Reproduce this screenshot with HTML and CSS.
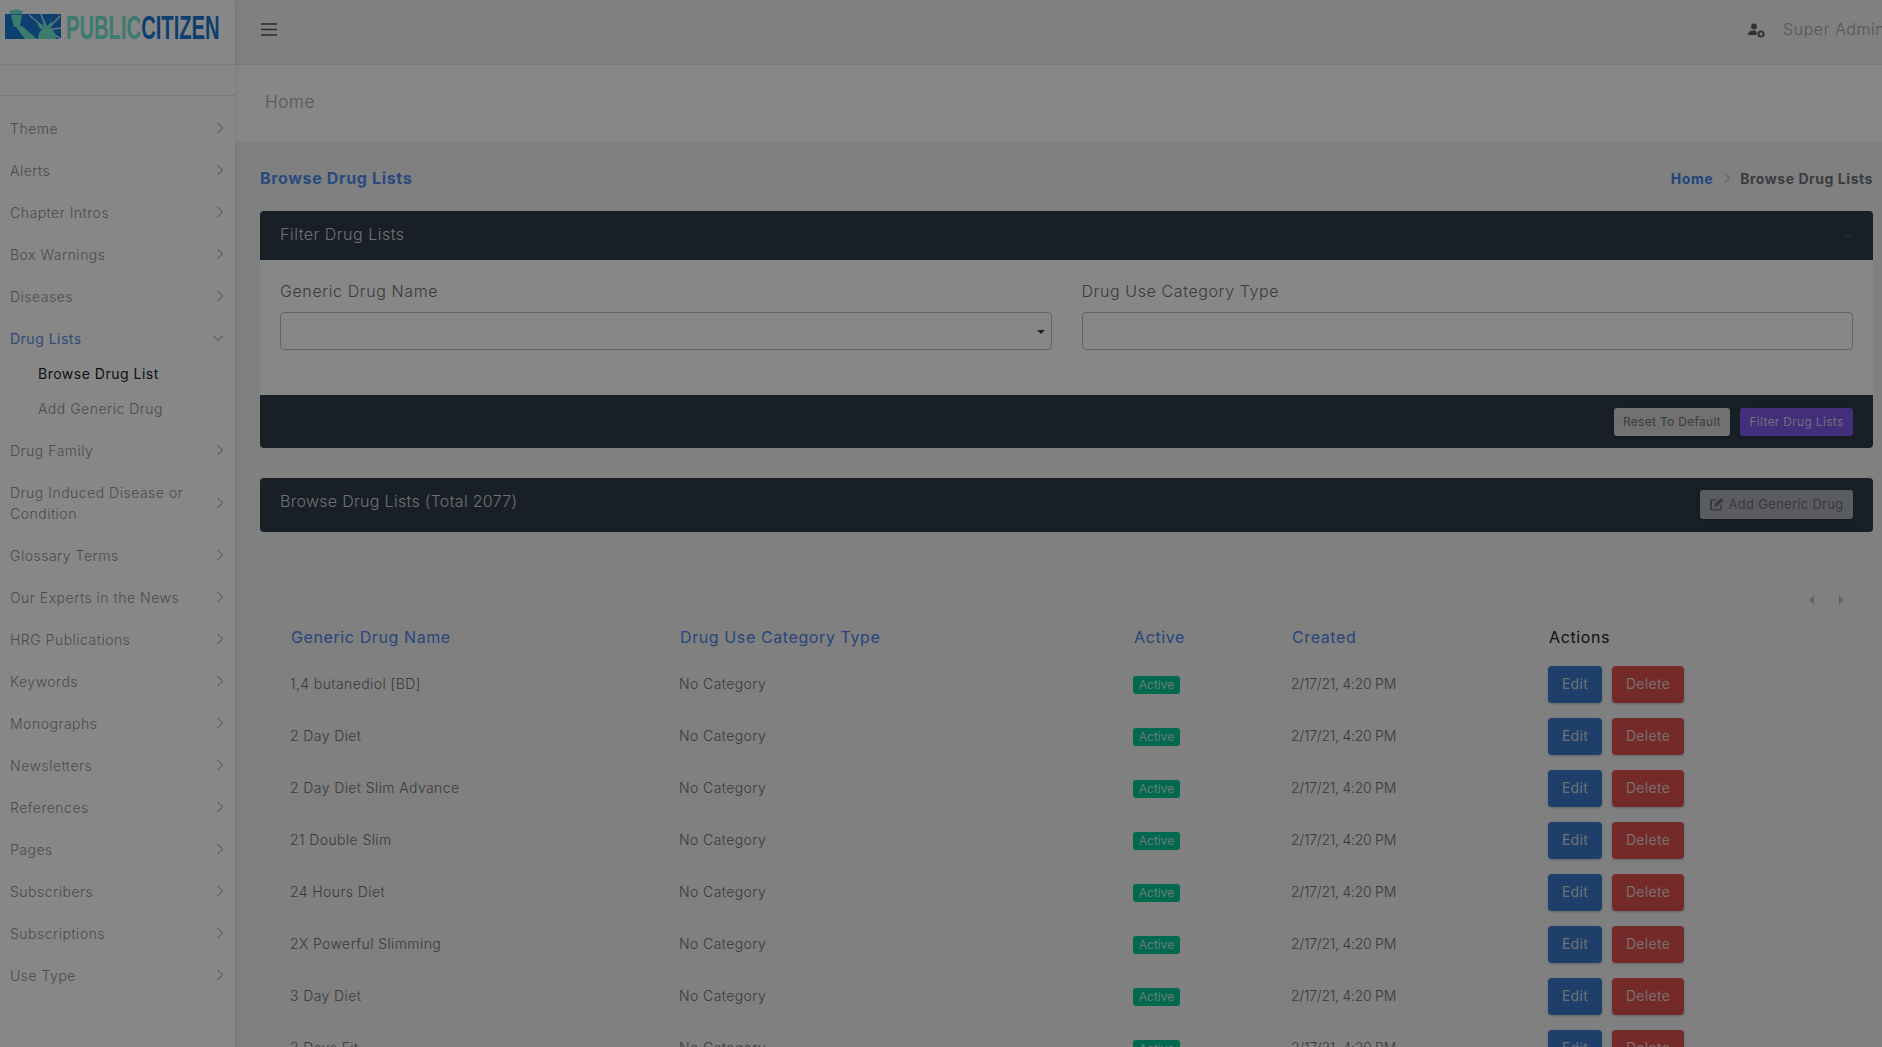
FILE: index.html
```html
<!DOCTYPE html>
<html lang="en">
<head>
<meta charset="utf-8">
<title>Browse Drug Lists</title>
<link rel="stylesheet" href="styles.css">
</head>
<body>
<svg class="sprite" aria-hidden="true">
  <symbol id="right" viewBox="0 0 8 12"><path d="M1.500 1l5 5-5 5" fill="none" stroke="currentColor" stroke-width="1"/></symbol>
  <symbol id="down" viewBox="0 0 12 8"><path d="M1 1.500l5 5 5-5" fill="none" stroke="currentColor" stroke-width="1"/></symbol>
</svg>
<div class="app">
  <aside class="sidebar">
    <div class="brand">
      <svg class="logo" viewBox="0 0 215 32" role="img" aria-label="Public Citizen">
        <rect x="0" y="5" width="56" height="25" fill="#1a78d2"/>
        <path d="M42 21L24 6M42 21L36 5M42 21L55 7M42 21L56 19M42 21L56 30" stroke="#fff" stroke-width="1.500" opacity=".75" fill="none"/>
        <path d="M33 30c0-7 4-11 9-11s9 4 9 11z" fill="#70e8cf"/>
        <path d="M35 20l-3-6 6 3 1-7 3 7 5-5-1 8z" fill="#70e8cf"/>
        <ellipse cx="11" cy="3" rx="7" ry="2.500" fill="#70e8cf"/>
        <path d="M6 6h11l-2 12H9z" fill="#70e8cf"/>
        <path d="M11 18l6-1 15 13H20z" fill="#70e8cf"/>
        <text class="logo-word" transform="translate(61 30) scale(.612 1)"><tspan fill="#70e8cf">PUBLIC</tspan><tspan fill="#1a78d2">CITIZEN</tspan></text>
      </svg>
    </div>
    <div class="side-gap"></div>
    <nav class="menu">
      <a class="item"><span>Theme</span><svg class="chev"><use href="#right"/></svg></a>
      <a class="item"><span>Alerts</span><svg class="chev"><use href="#right"/></svg></a>
      <a class="item"><span>Chapter Intros</span><svg class="chev"><use href="#right"/></svg></a>
      <a class="item"><span>Box Warnings</span><svg class="chev"><use href="#right"/></svg></a>
      <a class="item"><span>Diseases</span><svg class="chev"><use href="#right"/></svg></a>
      <a class="item item-open"><span>Drug Lists</span><svg class="chev-down"><use href="#down"/></svg></a>
      <div class="submenu">
        <a class="subitem subitem-current">Browse Drug List</a>
        <a class="subitem">Add Generic Drug</a>
      </div>
      <a class="item"><span>Drug Family</span><svg class="chev"><use href="#right"/></svg></a>
      <a class="item item-wrap"><span>Drug Induced Disease or Condition</span><svg class="chev"><use href="#right"/></svg></a>
      <a class="item"><span>Glossary Terms</span><svg class="chev"><use href="#right"/></svg></a>
      <a class="item"><span>Our Experts in the News</span><svg class="chev"><use href="#right"/></svg></a>
      <a class="item"><span>HRG Publications</span><svg class="chev"><use href="#right"/></svg></a>
      <a class="item"><span>Keywords</span><svg class="chev"><use href="#right"/></svg></a>
      <a class="item"><span>Monographs</span><svg class="chev"><use href="#right"/></svg></a>
      <a class="item"><span>Newsletters</span><svg class="chev"><use href="#right"/></svg></a>
      <a class="item"><span>References</span><svg class="chev"><use href="#right"/></svg></a>
      <a class="item"><span>Pages</span><svg class="chev"><use href="#right"/></svg></a>
      <a class="item"><span>Subscribers</span><svg class="chev"><use href="#right"/></svg></a>
      <a class="item"><span>Subscriptions</span><svg class="chev"><use href="#right"/></svg></a>
      <a class="item"><span>Use Type</span><svg class="chev"><use href="#right"/></svg></a>
    </nav>
  </aside>
  <div class="main">
    <header class="topbar">
      <svg class="burger" viewBox="0 0 16 13"><path d="M0 1h16M0 6.500h16M0 12h16" fill="none" stroke="currentColor" stroke-width="1.600"/></svg>
      <div class="user">
        <svg class="user-icon" viewBox="0 0 17 15"><circle cx="6" cy="3.500" r="3" fill="currentColor"/><path d="M0 12c0-3 2-4.500 5-4.500 1.500 0 2.500.3 3.500 1V12z" fill="currentColor"/><circle cx="13" cy="11" r="2.600" fill="none" stroke="currentColor" stroke-width="2"/></svg>
        <span class="user-name">Super Admin</span>
      </div>
    </header>
    <div class="crumbstrip">Home</div>
    <div class="content">
      <div class="title-row">
        <h1 class="page-title">Browse Drug Lists</h1>
        <div class="crumbs"><a class="crumb-link">Home</a><svg class="crumb-sep"><use href="#right"/></svg><span>Browse Drug Lists</span></div>
      </div>
      <section class="filter-card">
        <div class="dark-head filter-head"><span class="filter-title">Filter Drug Lists</span><i class="collapse"></i></div>
        <div class="filter-body">
          <label class="field"><span class="field-label">Generic Drug Name</span><div class="input"><i class="caret"></i></div></label>
          <label class="field"><span class="field-label">Drug Use Category Type</span><div class="input"></div></label>
        </div>
        <div class="filter-foot">
          <button class="btn-small btn-reset">Reset To Default</button>
          <button class="btn-small btn-filter">Filter Drug Lists</button>
        </div>
      </section>
      <section class="list-head dark-head">
        <span class="list-title">Browse Drug Lists (Total 2077)</span>
        <button class="btn-small btn-add">
          <svg class="add-icon" viewBox="0 0 14 13"><path d="M1.500 2h6.500l-1.300 1.300H2.300v8h8V7.500L11.600 6.200V11.500a1 1 0 0 1-1 1H1.500a1 1 0 0 1-1-1V3a1 1 0 0 1 1-1z" fill="currentColor"/><path d="M5 6.500L10.800 1 13 3 7.200 8.700l-2.600.4z" fill="currentColor"/></svg>Add Generic Drug</button>
      </section>
      <div class="pager">
        <span class="page-btn"><i class="tri-left"></i></span>
        <span class="page-btn"><i class="tri-right"></i></span>
      </div>
      <table class="grid">
        <colgroup><col class="c1"><col class="c2"><col class="c3"><col class="c4"><col class="c5"></colgroup>
        <thead><tr><th>Generic Drug Name</th><th>Drug Use Category Type</th><th>Active</th><th>Created</th><th class="th-plain">Actions</th></tr></thead>
        <tbody>
          <tr><td class="t">1,4 butanediol [BD]</td><td class="t">No Category</td><td><span class="badge">Active</span></td><td class="t date">2/17/21, 4:20 PM</td><td><button class="btn-edit">Edit</button><button class="btn-del">Delete</button></td></tr>
          <tr><td class="t">2 Day Diet</td><td class="t">No Category</td><td><span class="badge">Active</span></td><td class="t date">2/17/21, 4:20 PM</td><td><button class="btn-edit">Edit</button><button class="btn-del">Delete</button></td></tr>
          <tr><td class="t">2 Day Diet Slim Advance</td><td class="t">No Category</td><td><span class="badge">Active</span></td><td class="t date">2/17/21, 4:20 PM</td><td><button class="btn-edit">Edit</button><button class="btn-del">Delete</button></td></tr>
          <tr><td class="t">21 Double Slim</td><td class="t">No Category</td><td><span class="badge">Active</span></td><td class="t date">2/17/21, 4:20 PM</td><td><button class="btn-edit">Edit</button><button class="btn-del">Delete</button></td></tr>
          <tr><td class="t">24 Hours Diet</td><td class="t">No Category</td><td><span class="badge">Active</span></td><td class="t date">2/17/21, 4:20 PM</td><td><button class="btn-edit">Edit</button><button class="btn-del">Delete</button></td></tr>
          <tr><td class="t">2X Powerful Slimming</td><td class="t">No Category</td><td><span class="badge">Active</span></td><td class="t date">2/17/21, 4:20 PM</td><td><button class="btn-edit">Edit</button><button class="btn-del">Delete</button></td></tr>
          <tr><td class="t">3 Day Diet</td><td class="t">No Category</td><td><span class="badge">Active</span></td><td class="t date">2/17/21, 4:20 PM</td><td><button class="btn-edit">Edit</button><button class="btn-del">Delete</button></td></tr>
          <tr><td class="t">3 Days Fit</td><td class="t">No Category</td><td><span class="badge">Active</span></td><td class="t date">2/17/21, 4:20 PM</td><td><button class="btn-edit">Edit</button><button class="btn-del">Delete</button></td></tr>
        </tbody>
      </table>
    </div>
  </div>
</div>
<div class="backdrop"></div>
</body>
</html>
```
FILE: styles.css
```css
* { box-sizing: border-box; }
html, body { margin: 0; height: 100%; overflow: hidden; }
body {
  font-family: Inter, "Open Sans", "Liberation Sans", sans-serif;
  font-weight: 300;
  background: #f1f2f4;
  color: #6e7074;
}
.sprite { width: 0; height: 0; position: absolute; }
.backdrop { position: fixed; inset: 0; background: rgba(0, 0, 0, .47); }

.app { display: grid; grid-template-columns: 235px 1fr; height: 1047px; }

.sidebar { background: #fff; box-shadow: 0 0 6px rgba(0,0,0,.12); position: relative; }
.brand { height: 65px; padding: 9px 0 0 5px; border-bottom: 1px solid #efefef; }
.logo { display: block; width: 215px; height: 32px; }
.logo-word { font-family: "Liberation Sans", sans-serif; font-weight: 700; font-size: 33px; }
.side-gap { height: 31px; border-bottom: 1px solid #e2e2e2; }
.menu { padding-top: 11px; font-size: 14px; letter-spacing: .5px; color: #8e9095; }
.item { display: flex; align-items: center; justify-content: space-between; height: 42px; padding: 0 11px 0 10px; }
.item-wrap { height: 63px; line-height: 21px; }
.item-wrap span { width: 185px; }
.chev { width: 8px; height: 12px; flex: none; color: #8e9095; }
.chev-down { width: 12px; height: 8px; flex: none; color: #8e9095; margin-right: 0; }
.item-open { color: #5a8ee0; font-weight: 400; letter-spacing: .5px; }
.submenu { margin-top: -3px; padding-bottom: 3px; }
.subitem { display: block; height: 35px; line-height: 35px; padding-left: 38px; }
.subitem-current { color: #20242b; font-weight: 400; letter-spacing: .5px; }

.main { min-width: 0; }
.topbar { height: 65px; display: flex; align-items: center; justify-content: space-between; padding: 0 0 7px 26px; border-bottom: 1px solid #e3e4e6; }
.burger { width: 16px; height: 13px; color: #4c4e53; margin-top: 1px; }
.user { display: flex; align-items: center; width: 134px; overflow: hidden; white-space: nowrap; }
.user-icon { width: 17px; height: 15px; flex: none; color: #5c5f65; margin: 3px 18px 0 0; }
.user-name { font-size: 16px; letter-spacing: .55px; color: #a2a4a9; }
.crumbstrip { height: 77px; padding-left: 30px; background: #fff; font-size: 17px; line-height: 75px; letter-spacing: .7px; color: #a0a2a6; }

.content { padding: 0 9px 0 25px; }
.title-row { display: flex; justify-content: space-between; align-items: center; height: 69px; padding-top: 2px; }
.page-title { margin: 0; font-size: 16px; font-weight: 700; letter-spacing: .66px; color: #4f8dee; }
.crumbs { display: flex; align-items: center; font-size: 14px; font-weight: 700; letter-spacing: .55px; color: #6e7278; padding-top: 1px; }
.crumb-link { color: #3a84ec; }
.crumb-sep { width: 8px; height: 12px; margin: 0 9px 0 10px; color: #a5a8ad; }

.dark-head { background: #2f3b4b; color: #d0d3d7; }
.filter-card { background: #fff; border-radius: 4px; overflow: hidden; }
.filter-head { height: 49px; padding: 0 20px; display: flex; align-items: center; justify-content: space-between; font-size: 16px; letter-spacing: .5px; }
.filter-title { margin-top: -4px; }
.collapse { width: 10px; height: 1px; background: #4d5a6b; }
.filter-body { height: 135px; padding: 21px 20px 0; display: grid; grid-template-columns: 1fr 1fr; gap: 30px; }
.field { display: block; }
.field-label { display: block; font-size: 16px; letter-spacing: .6px; line-height: 20px; margin-bottom: 11px; color: #707276; }
.input { height: 38px; border: 1px solid #b9bcc0; border-radius: 4px; position: relative; }
.caret { position: absolute; right: 6px; top: 17px; border: 4px solid transparent; border-top-color: #3f4248; border-bottom: 0; }
.filter-foot { height: 53px; background: #2f3b4b; display: flex; justify-content: flex-end; align-items: center; gap: 10px; padding: 0 20px; }

button { font-family: inherit; font-weight: 300; border: 0; }
.btn-small { height: 28px; border-radius: 3px; font-size: 12px; letter-spacing: .3px; padding: 0; box-shadow: 0 1px 3px rgba(0,0,0,.25); }
.btn-reset { width: 116px; background: #d6d6d6; color: #6f7277; font-weight: 400; }
.btn-filter { width: 113px; background: #7d58e6; color: #d6d0ea; font-weight: 400; }

.list-head { margin-top: 30px; height: 54px; border-radius: 4px; padding: 0 20px; display: flex; align-items: center; justify-content: space-between; }
.list-title { font-size: 16px; letter-spacing: .3px; margin-top: -8px; }
.btn-add { width: 153px; height: 29px; margin-top: -2px; background: #acafb3; color: #696d74; font-size: 13px; font-weight: 400; letter-spacing: .3px; display: flex; align-items: center; justify-content: center; gap: 3px; }
.add-icon { width: 16px; height: 14px; }

.pager { display: flex; justify-content: flex-end; gap: 7px; padding: 56px 20px 0 0; height: 79px; }
.page-btn { width: 23px; height: 23px; border: 1px solid #eaebed; border-radius: 3px; display: flex; align-items: center; justify-content: center; }
.tri-left, .tri-right { border: 5px solid transparent; }
.tri-left { border-right-color: #bcbec2; border-left: 0; }
.tri-right { border-left-color: #bcbec2; border-right: 0; }

.grid { width: 1573px; margin-left: 20px; border-collapse: collapse; table-layout: fixed; font-size: 14px; letter-spacing: .4px; }
.c1 { width: 389px; } .c2 { width: 454px; } .c3 { width: 158px; } .c4 { width: 257px; } .c5 { width: 315px; }
th { height: 47px; padding: 5px 11px 0; text-align: left; font-size: 16px; font-weight: 400; letter-spacing: .6px; color: #4a84e6; border-bottom: 1px solid #edeff1; }
.th-plain { color: #1e2024; }
td { height: 52px; padding: 0 10px; border-bottom: 1px solid #edeff1; }
.t { padding-bottom: 2px; }
.date { letter-spacing: -.25px; }
.badge { display: inline-block; width: 47px; height: 18px; line-height: 18px; text-align: center; background: #00c795; border-radius: 3px; font-size: 12px; letter-spacing: 0; font-weight: 400; color: #c8e8df; }
.btn-edit, .btn-del { height: 37px; padding: 0 0 2px; border-radius: 4px; font-size: 14px; letter-spacing: .3px; font-weight: 400; box-shadow: 0 1px 3px rgba(0,0,0,.2); }
.btn-edit { width: 54px; background: #3778c8; color: #cfd6e2; margin-right: 10px; }
.btn-del { width: 72px; background: #d9504c; color: #e9d3d3; }
```
